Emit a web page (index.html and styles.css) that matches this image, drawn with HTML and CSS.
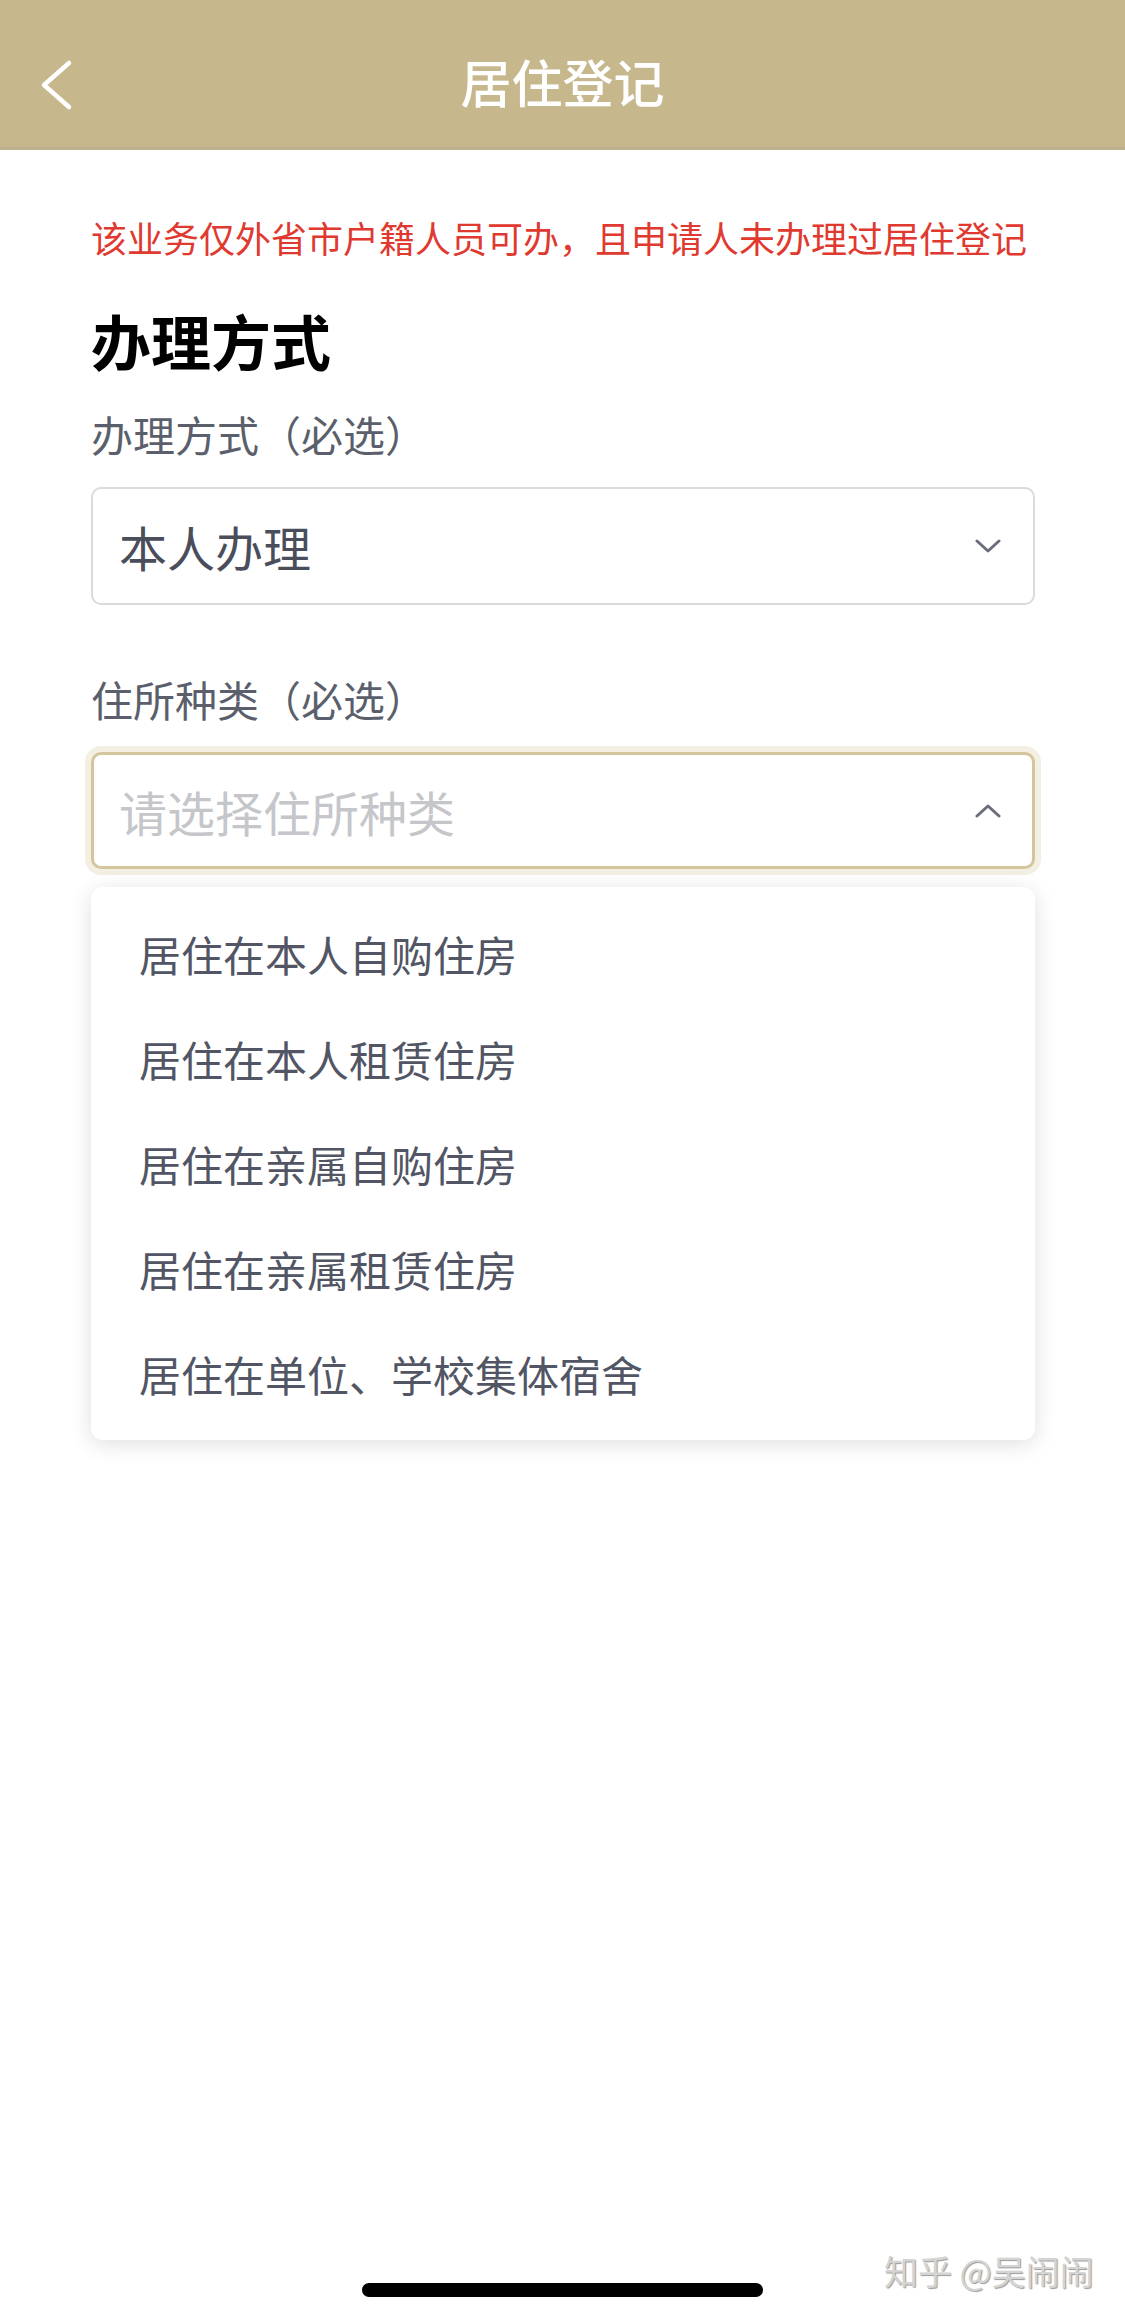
FILE: index.html
```html
<!DOCTYPE html>
<html lang="zh-CN">
<head>
<meta charset="utf-8">
<title>居住登记</title>
<link rel="stylesheet" href="styles.css">
</head>
<body>
<div class="screen">
  <header class="navbar">
    <div class="nav-left">
      <svg class="back" width="34" height="52" viewBox="0 0 34 52">
        <polyline points="29,4 4,26 29,48" fill="none" stroke="#ffffff" stroke-width="4.5" stroke-linecap="round" stroke-linejoin="round"/>
      </svg>
    </div>
    <h1 class="nav-title">居住登记</h1>
    <div class="nav-right"></div>
  </header>

  <main class="content">
    <p class="notice">该业务仅外省市户籍人员可办，且申请人未办理过居住登记</p>
    <h2 class="section-title">办理方式</h2>

    <div class="field">
      <div class="field-label">办理方式（必选）</div>
      <div class="select">
        <span class="select-value">本人办理</span>
        <svg class="chev" width="26" height="14" viewBox="0 0 26 14">
          <polyline points="2,2 13,12 24,2" fill="none" stroke="#6b6e7a" stroke-width="3" stroke-linecap="round" stroke-linejoin="round"/>
        </svg>
      </div>
    </div>

    <div class="field field-second">
      <div class="field-label">住所种类（必选）</div>
      <div class="select select-focus">
        <span class="select-placeholder">请选择住所种类</span>
        <svg class="chev" width="26" height="14" viewBox="0 0 26 14">
          <polyline points="2,12 13,2 24,12" fill="none" stroke="#6b6e7a" stroke-width="3" stroke-linecap="round" stroke-linejoin="round"/>
        </svg>
      </div>
      <ul class="dropdown">
        <li>居住在本人自购住房</li>
        <li>居住在本人租赁住房</li>
        <li>居住在亲属自购住房</li>
        <li>居住在亲属租赁住房</li>
        <li>居住在单位、学校集体宿舍</li>
      </ul>
    </div>
  </main>

  <div class="watermark">知乎 @吴闹闹</div>
  <div class="home-indicator"></div>
</div>
</body>
</html>
```

FILE: styles.css
```css
* { box-sizing: border-box; }

html, body {
  margin: 0;
  padding: 0;
  background: #ffffff;
}

body {
  font-family: "Noto Sans CJK SC", "Noto Sans", sans-serif;
}

.screen {
  position: relative;
  width: 1125px;
  height: 2322px;
  overflow: hidden;
  background: #ffffff;
}

.navbar {
  height: 150px;
  background: #c7b78c;
  border-bottom: 3px solid #bcb08f;
  display: grid;
  grid-template-columns: 1fr auto 1fr;
  align-items: center;
}

.nav-left {
  padding-left: 40px;
  display: flex;
  align-items: center;
  padding-top: 23px;
}

.nav-title {
  margin: 0;
  font-size: 51px;
  font-weight: 500;
  color: #ffffff;
  line-height: 1;
  padding-top: 16px;
}

.content {
  padding: 0 90px 0 91px;
}

.notice {
  margin: 62px 0 0;
  font-size: 36px;
  line-height: 50px;
  color: #e0392f;
  white-space: nowrap;
}

.section-title {
  margin: 38px 0 0;
  font-size: 60px;
  line-height: 80px;
  font-weight: 700;
  color: #000000;
}

.field {
  margin-top: 25px;
}

.field-second {
  margin-top: 65px;
}

.field-label {
  font-size: 42px;
  line-height: 58px;
  color: #5b5f6b;
}

.select {
  margin-top: 24px;
  height: 118px;
  border: 2px solid #dadbde;
  border-radius: 10px;
  display: flex;
  align-items: center;
  justify-content: space-between;
  padding: 0 32px 0 26px;
  background: #ffffff;
}

.select-focus {
  border: 3px solid #d4c59d;
  box-shadow: 0 0 0 6px #f4efe3;
  height: 117px;
  padding: 0 31px 0 25px;
}

.select-value {
  font-size: 48px;
  color: #4a4d5a;
  line-height: 1;
}

.select-placeholder {
  font-size: 48px;
  color: #c5c6ca;
  line-height: 1;
}

.chev {
  display: block;
}

.dropdown {
  list-style: none;
  margin: 18px 0 0;
  padding: 14px 0;
  background: #ffffff;
  border-radius: 12px;
  box-shadow: 0 4px 22px rgba(0, 0, 0, 0.13);
}

.dropdown li {
  height: 105px;
  display: flex;
  align-items: center;
  padding-left: 48px;
  font-size: 42px;
  color: #525664;
}

.watermark {
  position: absolute;
  left: 884px;
  top: 2249px;
  font-size: 34px;
  line-height: 44px;
  color: #d4d4d4;
  text-shadow: 1px 1px 1px rgba(0, 0, 0, 0.4);
  white-space: nowrap;
}

.home-indicator {
  position: absolute;
  left: 362px;
  top: 2283px;
  width: 401px;
  height: 14px;
  border-radius: 7px;
  background: #000000;
}
```
